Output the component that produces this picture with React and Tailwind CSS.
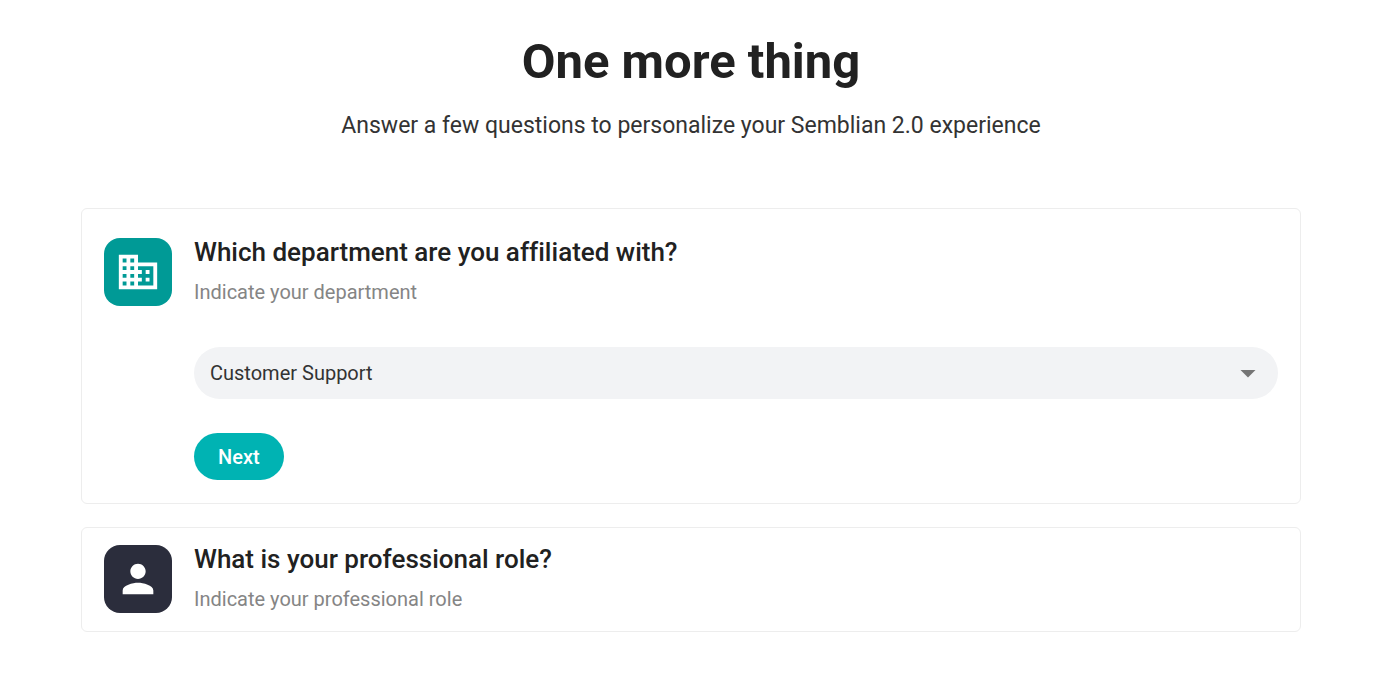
import React, { useState } from "react";
import { MdArrowDropDown, MdBusiness, MdPerson } from "react-icons/md";

const departments = ["Customer Support", "Engineering", "Marketing", "Sales", "Human Resources"];

const QuestionHeader = ({ icon: Icon, iconClass, id, title, hint }) => (
  <div className="flex gap-[22px]">
    <div className={`w-[68px] h-[68px] shrink-0 rounded-2xl flex items-center justify-center text-white ${iconClass}`}>
      <Icon className="w-[46px] h-[46px]" />
    </div>
    <div>
      <h2 id={id} className="text-[26px] leading-7 font-medium text-[#212121] [font-variant-ligatures:none]">{title}</h2>
      <p className="mt-3 text-xl leading-7 text-[#858585]">{hint}</p>
    </div>
  </div>
);

const App = () => {
  const [department, setDepartment] = useState("Customer Support");

  return (
    <div className="min-h-screen bg-white pr-[18px] font-[Roboto,sans-serif]">
      <main className="max-w-[1220px] mx-auto pt-8 pb-14">
        {/* Heading */}
        <header className="text-center">
          <h1 className="text-[49px] leading-[60px] font-bold text-[#212121]">One more thing</h1>
          <p className="mt-[18px] text-[23px] leading-8 text-[#333333]">
            Answer a few questions to personalize your Semblian 2.0 experience
          </p>
        </header>

        {/* Department */}
        <section className="mt-[66px] border border-[#ededed] rounded-md px-[22px] pt-[29px] pb-[23px]">
          <QuestionHeader
            icon={MdBusiness}
            iconClass="bg-[#009a96]"
            id="department-title"
            title="Which department are you affiliated with?"
            hint="Indicate your department"
          />
          <form className="mt-[41px] pl-[90px]" onSubmit={(e) => e.preventDefault()}>
            <div className="relative">
              <select
                aria-labelledby="department-title"
                value={department}
                onChange={(e) => setDepartment(e.target.value)}
                className="appearance-none w-full h-[52px] rounded-full bg-[#f2f3f5] pl-4 pr-14 text-xl text-[#333333]"
              >
                {departments.map((name) => (
                  <option key={name}>{name}</option>
                ))}
              </select>
              <MdArrowDropDown className="absolute right-3 top-2 w-9 h-9 text-[#757575] pointer-events-none" />
            </div>
            <button type="submit" className="mt-[34px] h-[47px] px-6 rounded-full bg-[#00b3b3] text-xl font-medium text-white">
              Next
            </button>
          </form>
        </section>

        {/* Role */}
        <section className="mt-[23px] border border-[#ededed] rounded-md px-[22px] pt-[17px] pb-[18px]">
          <QuestionHeader
            icon={MdPerson}
            iconClass="bg-[#2b2d3c]"
            id="role-title"
            title="What is your professional role?"
            hint="Indicate your professional role"
          />
        </section>
      </main>
    </div>
  );
};

export default App;
